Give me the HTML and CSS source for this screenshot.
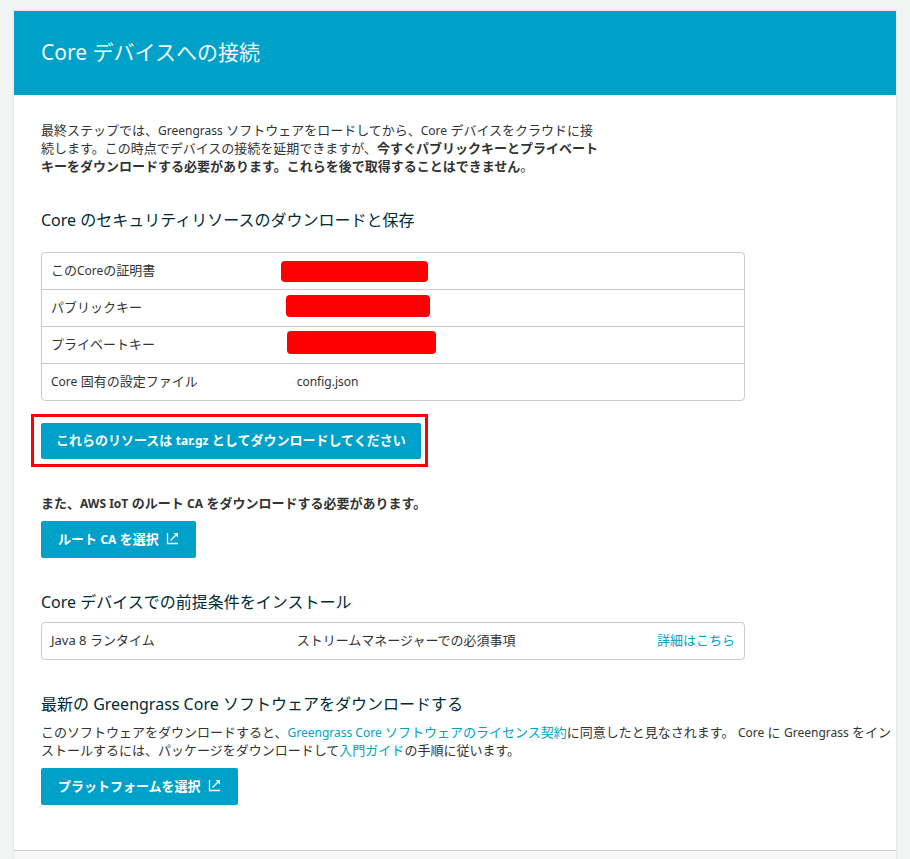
FILE: index.html
```html
<!DOCTYPE html>
<html lang="ja">
<head>
<meta charset="utf-8">
<meta name="viewport" content="width=device-width, initial-scale=1">
<title>Core デバイスへの接続</title>
<link rel="stylesheet" href="styles.css">
</head>
<body>
<main class="card">
  <header class="card-header">
    <h1>Core デバイスへの接続</h1>
  </header>
  <div class="card-body">
    <p class="intro">最終ステップでは、<span class="latin">Greengrass</span> ソフトウェアをロードしてから、<span class="latin">Core</span> デバイスをクラウドに接<br>続します。この時点でデバイスの接続を延期できますが、<strong>今すぐパブリックキーとプライベート<br>キーをダウンロードする必要があります。これらを後で取得することはできません</strong>。</p>

    <section class="security">
      <h2>Core のセキュリティリソースのダウンロードと保存</h2>
      <table class="box">
        <tbody>
          <tr><th scope="row">この<span class="latin">Core</span>の証明書</th><td><span class="mask mask-cert"></span></td></tr>
          <tr><th scope="row">パブリックキー</th><td><span class="mask mask-public"></span></td></tr>
          <tr><th scope="row">プライベートキー</th><td><span class="mask mask-private"></span></td></tr>
          <tr><th scope="row"><span class="latin">Core</span> 固有の設定ファイル</th><td><span class="latin">config.json</span></td></tr>
        </tbody>
      </table>
      <div class="highlight">
        <button type="button" class="btn btn-download"><span>これらのリソースは <span class="latin">tar.gz</span> としてダウンロードしてください</span></button>
      </div>
      <p class="note">また、<span class="latin">AWS IoT</span> のルート <span class="latin">CA</span> をダウンロードする必要があります。</p>
      <a href="#root-ca" class="btn"><span>ルート <span class="latin">CA</span> を選択</span>
        <svg class="icon" viewBox="0 0 13 13" aria-hidden="true"><path d="M1.5 1v10.5H12M4.5 8.5L10 3" /><path class="head" d="M7.5 1H12v4.5z" /></svg>
      </a>
    </section>

    <section class="prereq">
      <h2>Core デバイスでの前提条件をインストール</h2>
      <table class="box">
        <tbody>
          <tr><th scope="row">Java 8 ランタイム</th><td>ストリームマネージャーでの必須事項</td><td class="more"><a href="#details">詳細はこちら</a></td></tr>
        </tbody>
      </table>
    </section>

    <section class="software">
      <h2>最新の Greengrass Core ソフトウェアをダウンロードする</h2>
      <p>このソフトウェアをダウンロードすると、<a href="#license"><span class="latin">Greengrass Core</span> ソフトウェアのライセンス契約</a>に同意したと見なされます。 <span class="latin">Core</span> に <span class="latin">Greengrass</span> をイン<br>ストールするには、パッケージをダウンロードして<a href="#guide">入門ガイド</a>の手順に従います。</p>
      <a href="#platform" class="btn"><span>プラットフォームを選択</span>
        <svg class="icon" viewBox="0 0 13 13" aria-hidden="true"><path d="M1.5 1v10.5H12M4.5 8.5L10 3" /><path class="head" d="M7.5 1H12v4.5z" /></svg>
      </a>
    </section>
  </div>
  <footer class="card-footer"></footer>
</main>
</body>
</html>
```

FILE: styles.css
```css
* { box-sizing: border-box; }

body {
  display: flex;
  flex-direction: column;
  min-height: 100vh;
  margin: 0;
  padding: 11px 14px 0;
  background: #f2f3f3;
  color: #333;
  font: 13px/18px "Noto Sans", "Noto Sans CJK JP", sans-serif;
}

h1, h2, p { margin: 0; }

h1 {
  font-size: 21px;
  line-height: 28px;
  font-weight: 400;
}

h2 {
  color: #002b36;
  font-size: 16px;
  line-height: 24px;
  font-weight: 400;
}

a { color: #00a1c9; text-decoration: none; }

/* Latin letters run large beside kana, so they are set one size down. */
.latin { font-size: 12px; line-height: 1; }

.card {
  display: flex;
  flex: 1;
  flex-direction: column;
  background: #fff;
  box-shadow: 0 0 1px 1px #eaeaea;
}

.card-header {
  padding: 27px 27px 29px;
  background: #00a1c9;
  color: #f0f8fa;
}

.card-body { padding: 26px 27px 45px; }

.card-footer {
  flex: 1;
  border-top: 1px solid #ccc;
  background: #f7f7f7;
}

.intro { max-width: 560px; }

.security { margin-top: 33px; }
.prereq { margin-top: 32px; }
.software { margin-top: 32px; }

.box {
  width: 100%;
  max-width: 704px;
  border: 1px solid #ccc;
  border-radius: 4px;
  border-spacing: 0;
  table-layout: fixed;
}

.security .box { margin-top: 20px; }
.prereq .box { margin-top: 8px; }

.box th,
.box td {
  position: relative;
  height: 36px;
  padding: 0 9px 2px;
  font-weight: 400;
  text-align: left;
}

.box tr + tr > * { height: 37px; border-top: 1px solid #ccc; }
.box th { width: 35%; }
.box .more { width: 120px; text-align: right; }

.mask {
  position: absolute;
  border-radius: 4px;
  background: #f00;
}

.mask-cert { left: -7px; top: 8px; width: 147px; height: 21px; }
.mask-public { left: -2px; top: 5px; width: 144px; height: 22px; }
.mask-private { left: -1px; top: 4px; width: 149px; height: 23px; }

.btn {
  display: inline-flex;
  align-items: center;
  gap: 7px;
  height: 37px;
  padding: 0 17px 2px;
  border: 0;
  border-radius: 2px;
  background: #00a1c9;
  color: #fff;
  font: inherit;
  font-weight: 700;
  white-space: nowrap;
  vertical-align: top;
}

.btn-download { height: 36px; padding: 0 15px 2px; }

.icon {
  width: 13px;
  height: 13px;
  fill: none;
  stroke: #fff;
  stroke-width: 1.3;
}

.icon .head { fill: #fff; stroke: none; }

.highlight {
  display: flex;
  position: relative;
  width: fit-content;
  margin-top: 22px;
}

.highlight::after {
  content: "";
  position: absolute;
  inset: -9px -7px -8px -10px;
  border: 3px solid #f00;
  pointer-events: none;
}

.note {
  margin: 35px 0 9px;
  font-weight: 700;
}

/* The licence text may reach a little into the card's side padding. */
.software p { margin: 7px -24px 9px 0; }
```
